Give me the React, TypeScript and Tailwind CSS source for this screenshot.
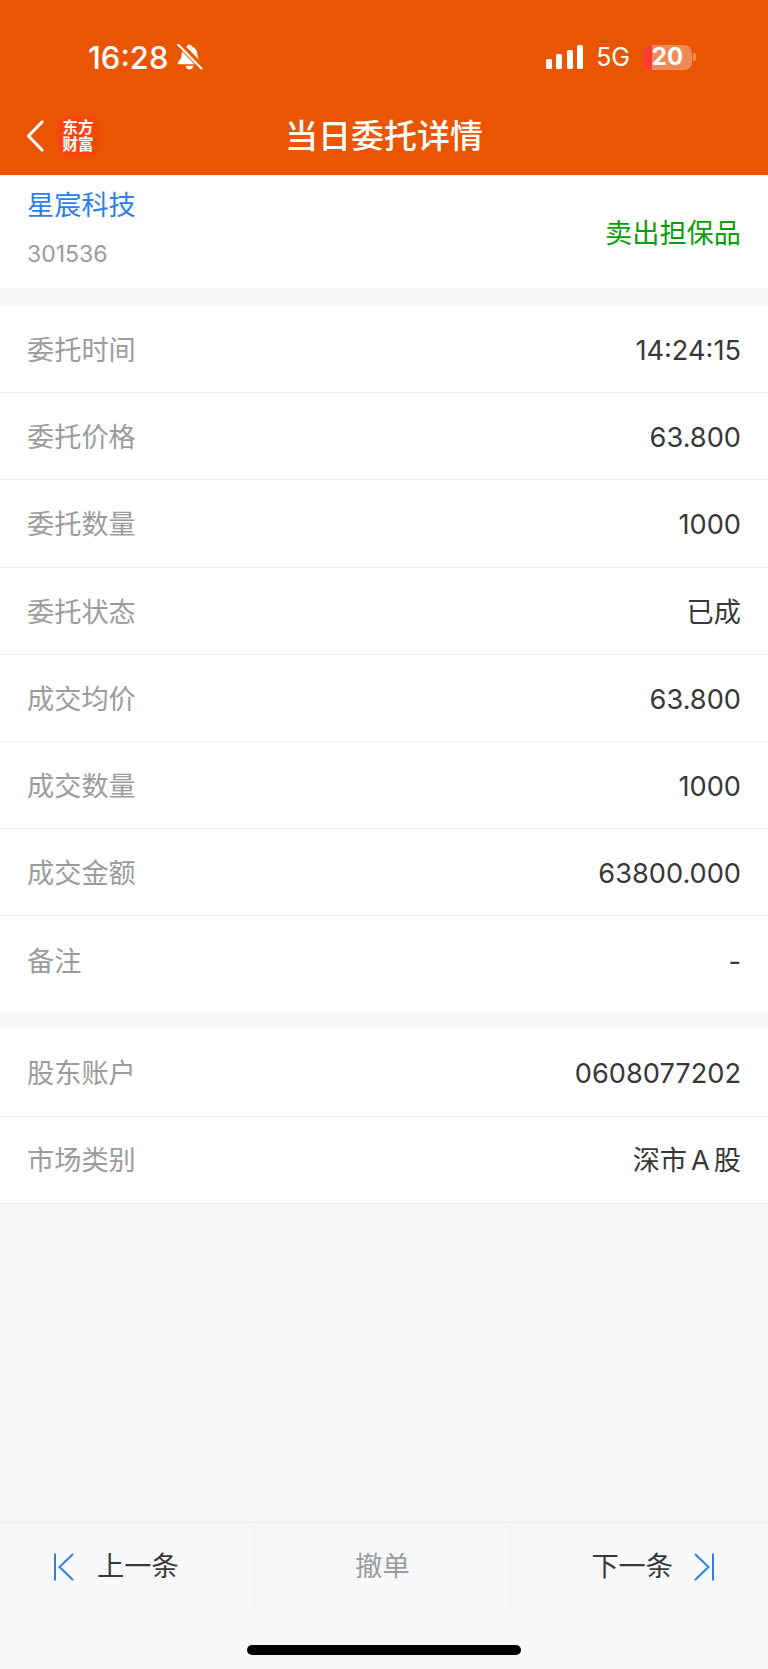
import type { ReactNode } from "react";

const rowsA: [string, ReactNode][] = [
  ["委托时间", "14:24:15"],
  ["委托价格", "63.800"],
  ["委托数量", "1000"],
  ["委托状态", "已成"],
  ["成交均价", "63.800"],
  ["成交数量", "1000"],
  ["成交金额", "63800.000"],
];

const rowsB: [string, ReactNode][] = [
  ["股东账户", "0608077202"],
  [
    "市场类别",
    <>
      深市<span className="mx-[4px]">A</span>股
    </>,
  ],
];

function Row({ label, value }: { label: string; value: ReactNode }) {
  return (
    <div className="flex h-[87.2px] items-center justify-between border-b border-[#eeeeee] px-[27px] pt-[3px]">
      <span className="text-[#9c9c9c]">{label}</span>
      <span className="text-[#383838]">{value}</span>
    </div>
  );
}

function MutedBell() {
  return (
    <svg width="27" height="27" viewBox="0 0 26 26" fill="none">
      <path
        d="M13 .5c-1.300 0-2.200 .9-2.300 2C7.300 3.400 5.700 6.300 5.500 9.500c-.2 3.700-.9 5.600-3.300 7.700-1 .9-.5 2.300.8 2.300h20c1.300 0 1.800-1.400.8-2.300-2.400-2.100-3.100-4-3.300-7.700-.2-3.200-1.800-6.100-5.200-7-.1-1.100-1-2-2.300-2z"
        fill="white"
      />
      <path d="M9.300 21h7.400c-.2 2.100-1.700 3.500-3.700 3.500S9.500 23.100 9.300 21z" fill="white" />
      <path d="M1 -2 27 24.500" stroke="#ea5504" strokeWidth="6" />
      <path d="M2 .5 24.500 23.500" stroke="white" strokeWidth="2" strokeLinecap="round" />
    </svg>
  );
}

function SignalBars() {
  return (
    <div className="flex items-end gap-[4.500px]">
      <div className="h-[10px] w-[6px] rounded-[1.500px] bg-white" />
      <div className="h-[15px] w-[6px] rounded-[1.500px] bg-white" />
      <div className="h-[19px] w-[6px] rounded-[1.500px] bg-white" />
      <div className="h-[24px] w-[6px] rounded-[1.500px] bg-white" />
    </div>
  );
}

function Battery() {
  return (
    <div className="flex items-center gap-[1px]">
      <div className="relative flex h-[25px] w-[49px] rounded-[8px] bg-[#f08a54]">
        <div className="h-full w-[9px] rounded-l-[8px] bg-[#fb3c36]" />
        <span className="absolute inset-0 flex items-center justify-center text-[24px] leading-none font-bold text-white">
          20
        </span>
      </div>
      <div className="h-[8px] w-[3px] rounded-r-[2px] bg-[#f08a54]" />
    </div>
  );
}

function Logo() {
  return (
    <div className="flex h-[40px] w-[40px] flex-col items-center justify-center gap-[1px] rounded-[8px] bg-[#fa4510] text-[15.500px] leading-[16px] font-bold text-white">
      <span>东方</span>
      <span>财富</span>
    </div>
  );
}

function EdgeArrow({ flip }: { flip?: boolean }) {
  return (
    <svg width="20" height="28" viewBox="0 0 20 28" fill="none" className={flip ? "-scale-x-100" : ""}>
      <path d="M1 0.500V27.500" stroke="#2f7fe6" strokeWidth="2" />
      <path d="M19 1 5.500 14 19 27" stroke="#2f7fe6" strokeWidth="2" />
    </svg>
  );
}

export default function App() {
  return (
    <div
      className="flex h-[1669px] w-[768px] flex-col overflow-hidden bg-[#f7f8fa] text-[27.2px] leading-none"
      style={{ fontFamily: 'Inter, "Noto Sans CJK SC", sans-serif' }}
    >
      <header className="h-[175px] shrink-0 bg-[#ea5504] text-white">
        <div className="flex h-[114px] items-center justify-between pr-[72px] pl-[88px]">
          <div className="flex items-center gap-[8px]">
            <span className="text-[31px] font-medium">16:28</span>
            <MutedBell />
          </div>
          <div className="flex items-center">
            <SignalBars />
            <span className="ml-[13px] text-[25px]">5G</span>
            <div className="ml-[13px]">
              <Battery />
            </div>
          </div>
        </div>
        <div className="relative flex h-[61px] items-center justify-center pb-[17px]">
          <div className="absolute top-[2px] left-[26px] flex items-center gap-[14px]">
            <svg width="18" height="32" viewBox="0 0 18 32" fill="none">
              <path d="M16 2 2.500 16 16 30" stroke="white" strokeWidth="3.200" strokeLinecap="round" strokeLinejoin="round" />
            </svg>
            <Logo />
          </div>
          <h1 className="text-[33px] font-medium">当日委托详情</h1>
        </div>
      </header>

      <section className="flex h-[113px] shrink-0 items-start justify-between bg-white px-[27px]">
        <div>
          <div className="mt-[17px] text-[#2f7fe6]">星宸科技</div>
          <div className="mt-[24px] text-[23px] text-[#9c9c9c]">301536</div>
        </div>
        <div className="mt-[45px] text-[#0a9f0a]">卖出担保品</div>
      </section>

      <section className="mt-[18px] shrink-0 bg-white">
        {rowsA.map(([label, value]) => (
          <Row key={label} label={label} value={value} />
        ))}
        <div className="flex h-[96px] justify-between px-[27px] pt-[32px]">
          <span className="text-[#9c9c9c]">备注</span>
          <span className="text-[#383838]">-</span>
        </div>
      </section>

      <section className="mt-[17px] shrink-0 bg-white">
        {rowsB.map(([label, value]) => (
          <Row key={label} label={label} value={value} />
        ))}
      </section>

      <div className="flex-1" />

      <footer className="shrink-0 border-t border-[#eeeeee]">
        <div className="flex h-[86px] pt-[2px] text-[#383838]">
          <div className="flex w-[255px] items-center gap-[23px] border-r border-[#eeeeee] pl-[54px]">
            <EdgeArrow />
            <span>上一条</span>
          </div>
          <div className="flex w-[256px] items-center justify-center border-r border-[#eeeeee] text-[#9c9c9c]">
            撤单
          </div>
          <div className="flex flex-1 items-center justify-end gap-[21px] pr-[54px]">
            <span>下一条</span>
            <EdgeArrow flip />
          </div>
        </div>
        <div className="flex h-[60px] justify-center pt-[36px]">
          <div className="h-[10px] w-[274px] rounded-full bg-black" />
        </div>
      </footer>
    </div>
  );
}
